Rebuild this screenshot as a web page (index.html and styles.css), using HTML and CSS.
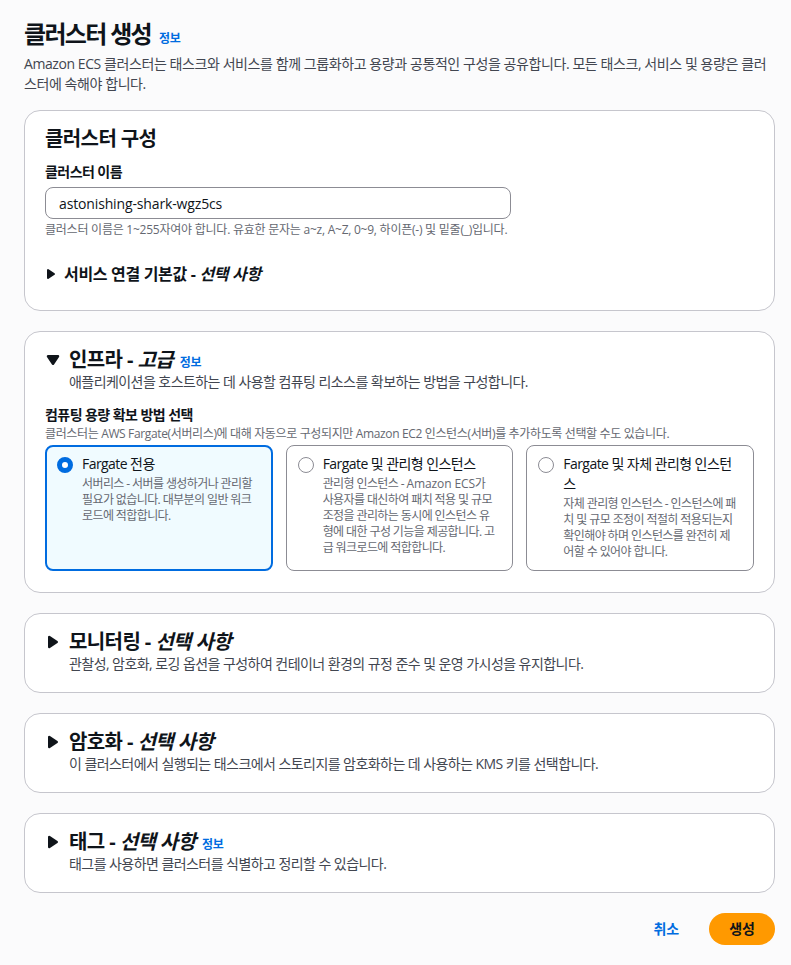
FILE: index.html
```html
<!DOCTYPE html>
<html lang="ko">
<head>
<meta charset="utf-8">
<title>클러스터 생성</title>
<link rel="stylesheet" href="styles.css">
</head>
<body>
<main class="page">
  <header class="page-header">
    <div class="title-row">
      <h1 class="page-title">클러스터 생성</h1>
      <a class="info" href="#">정보</a>
    </div>
    <p class="page-desc">Amazon ECS 클러스터는 태스크와 서비스를 함께 그룹화하고 용량과 공통적인 구성을 공유합니다. 모든 태스크, 서비스 및 용량은 클러스터에 속해야 합니다.</p>
  </header>

  <section class="card">
    <h2 class="card-title">클러스터 구성</h2>
    <div class="field">
      <label class="field-label" for="name">클러스터 이름</label>
      <input class="text-input" id="name" type="text" value="astonishing-shark-wgz5cs">
      <p class="field-hint">클러스터 이름은 1~255자여야 합니다. 유효한 문자는 a~z, A~Z, 0~9, 하이픈(-) 및 밑줄(_)입니다.</p>
    </div>
    <div class="expander">
      <svg class="caret-sm" viewBox="0 0 16 16" width="16" height="16"><path d="M5 4v8l6-4z" fill="#0f141a" stroke="#0f141a" stroke-width="2" stroke-linejoin="round"/></svg>
      <span class="expander-title">서비스 연결 기본값 - <em>선택 사항</em></span>
    </div>
  </section>

  <section class="card card-infra">
    <div class="exp-head">
      <svg class="caret" viewBox="0 0 16 16" width="20" height="20"><path d="M4 5h8l-4 6z" fill="#0f141a" stroke="#0f141a" stroke-width="2" stroke-linejoin="round"/></svg>
      <div class="exp-text">
        <h2 class="card-title">인프라 - <em>고급</em> <a class="info" href="#">정보</a></h2>
        <p class="card-desc">애플리케이션을 호스트하는 데 사용할 컴퓨팅 리소스를 확보하는 방법을 구성합니다.</p>
      </div>
    </div>
    <div class="capacity">
      <div class="field-label">컴퓨팅 용량 확보 방법 선택</div>
      <p class="field-sub">클러스터는 AWS Fargate(서버리스)에 대해 자동으로 구성되지만 Amazon EC2 인스턴스(서버)를 추가하도록 선택할 수도 있습니다.</p>
      <div class="tiles">
        <div class="tile selected">
          <span class="radio on"></span>
          <div class="tile-text">
            <div class="tile-title">Fargate 전용</div>
            <div class="tile-desc">서버리스 - 서버를 생성하거나 관리할 필요가 없습니다. 대부분의 일반 워크로드에 적합합니다.</div>
          </div>
        </div>
        <div class="tile">
          <span class="radio"></span>
          <div class="tile-text">
            <div class="tile-title">Fargate 및 관리형 인스턴스</div>
            <div class="tile-desc">관리형 인스턴스 - <span class="latin">Amazon ECS</span>가 사용자를 대신하여 패치 적용 및 규모 조정을 관리하는 동시에 인스턴스 유형에 대한 구성 기능을 제공합니다. 고급 워크로드에 적합합니다.</div>
          </div>
        </div>
        <div class="tile">
          <span class="radio"></span>
          <div class="tile-text">
            <div class="tile-title">Fargate 및 자체 관리형 인스턴스</div>
            <div class="tile-desc">자체 관리형 인스턴스 - 인스턴스에 패치 및 규모 조정이 적절히 적용되는지 확인해야 하며 인스턴스를 완전히 제어할 수 있어야 합니다.</div>
          </div>
        </div>
      </div>
    </div>
  </section>

  <section class="card">
    <div class="exp-head">
      <svg class="caret" viewBox="0 0 16 16" width="20" height="20"><path d="M5 4v8l6-4z" fill="#0f141a" stroke="#0f141a" stroke-width="2" stroke-linejoin="round"/></svg>
      <div class="exp-text">
        <h2 class="card-title">모니터링 - <em>선택 사항</em></h2>
        <p class="card-desc">관찰성, 암호화, 로깅 옵션을 구성하여 컨테이너 환경의 규정 준수 및 운영 가시성을 유지합니다.</p>
      </div>
    </div>
  </section>

  <section class="card">
    <div class="exp-head">
      <svg class="caret" viewBox="0 0 16 16" width="20" height="20"><path d="M5 4v8l6-4z" fill="#0f141a" stroke="#0f141a" stroke-width="2" stroke-linejoin="round"/></svg>
      <div class="exp-text">
        <h2 class="card-title">암호화 - <em>선택 사항</em></h2>
        <p class="card-desc">이 클러스터에서 실행되는 태스크에서 스토리지를 암호화하는 데 사용하는 KMS 키를 선택합니다.</p>
      </div>
    </div>
  </section>

  <section class="card">
    <div class="exp-head">
      <svg class="caret" viewBox="0 0 16 16" width="20" height="20"><path d="M5 4v8l6-4z" fill="#0f141a" stroke="#0f141a" stroke-width="2" stroke-linejoin="round"/></svg>
      <div class="exp-text">
        <h2 class="card-title">태그 - <em>선택 사항</em> <a class="info" href="#">정보</a></h2>
        <p class="card-desc">태그를 사용하면 클러스터를 식별하고 정리할 수 있습니다.</p>
      </div>
    </div>
  </section>

  <div class="actions">
    <button class="btn-link" type="button">취소</button>
    <button class="btn-primary" type="button">생성</button>
  </div>
</main>
</body>
</html>
```

FILE: styles.css
```css
* { box-sizing: border-box; }
html, body { margin: 0; padding: 0; }
body {
  background: #fbfbfc;
  color: #0f141a;
  font-family: "Open Sans", "Noto Sans CJK KR", sans-serif;
  font-size: 14px;
  line-height: 20px;
  letter-spacing: -0.04em;
}
.page {
  padding: 18px 16px 20px 24px;
}
.title-row {
  display: flex;
  align-items: baseline;
  gap: 8px;
  height: 32px;
}
.page-title {
  margin: 0;
  font-size: 24px;
  line-height: 32px;
  font-weight: 700;
  letter-spacing: -0.07em;
}
.info {
  font-size: 12px;
  line-height: 16px;
  font-weight: 700;
  color: #006ce0;
  text-decoration: none;
  letter-spacing: -0.02em;
}
.card-title .info { margin-left: 2px; }
.page-desc {
  margin: 4px 0 0;
  color: #424650;
  letter-spacing: -0.03em;
}
.card {
  margin-top: 16px;
  background: #fff;
  border: 1px solid #c6c6cd;
  border-radius: 16px;
  padding: 16px 20px 18px;
}
.card + .card { margin-top: 20px; }
.card-infra { padding-bottom: 21px; }
.card-title {
  margin: 0;
  font-size: 20px;
  line-height: 24px;
  font-weight: 700;
  letter-spacing: -0.03em;
}
.card-title em { font-style: italic; }
.card-desc { margin: 0; color: #424650; }
.field { margin-top: 12px; }
.field-label {
  display: block;
  font-weight: 700;
  line-height: 18px;
}
.text-input {
  display: block;
  margin-top: 6px;
  width: 466px;
  height: 32px;
  border: 1px solid #8c8c94;
  border-radius: 8px;
  padding: 0 13px;
  font: inherit;
  letter-spacing: -0.01em;
  color: #0f141a;
  background: #fff;
}
.field-hint {
  margin: 3px 0 0;
  font-size: 12px;
  line-height: 16px;
  color: #656871;
  letter-spacing: -0.02em;
}
.expander {
  display: flex;
  align-items: center;
  gap: 5px;
  margin-top: 25px;
  padding-bottom: 7px;
}
.caret-sm { margin-left: -2px; flex: none; }
.expander-title {
  font-size: 16px;
  line-height: 22px;
  font-weight: 700;
  letter-spacing: -0.02em;
}
.exp-head {
  display: flex;
  gap: 6px;
}
.caret { flex: none; margin: 2px 0 0 -2px; }
.capacity { margin-top: 14px; }
.field-sub {
  margin: 2px 0 0;
  font-size: 12px;
  line-height: 16px;
  color: #656871;
  letter-spacing: -0.03em;
}
.tiles {
  margin-top: 3px;
  display: grid;
  grid-template-columns: repeat(3, 1fr);
  gap: 13px;
}
.tile {
  display: flex;
  gap: 9px;
  border: 1px solid #8c8c94;
  border-radius: 8px;
  padding: 8px 16px 10px 11px;
  background: #fff;
}
.tile.selected {
  border: 2px solid #006ce0;
  background: #f0fbff;
  padding: 7px 15px 9px 10px;
}
.radio {
  flex: none;
  width: 16px;
  height: 16px;
  margin-top: 3px;
  border: 1px solid #8c8c94;
  border-radius: 50%;
  background: #fff;
}
.radio.on {
  border: 5px solid #006ce0;
}
.tile-title { line-height: 20px; }
.tile-desc {
  margin-top: 2px;
  font-size: 12px;
  line-height: 16px;
  color: #656871;
  letter-spacing: -0.05em;
}
.tile-desc .latin { letter-spacing: -0.01em; }
.actions {
  display: flex;
  justify-content: flex-end;
  align-items: center;
  gap: 10px;
  margin-top: 20px;
}
.btn-link {
  background: none;
  border: none;
  font: inherit;
  font-weight: 700;
  color: #006ce0;
  padding: 6px 20px;
}
.btn-primary {
  background: #ff9900;
  border: none;
  border-radius: 16px;
  height: 32px;
  padding: 0 20px;
  font: inherit;
  font-weight: 700;
  color: #0f141a;
}
```
